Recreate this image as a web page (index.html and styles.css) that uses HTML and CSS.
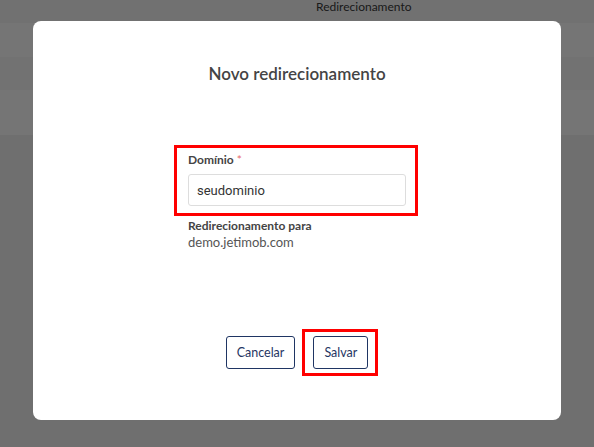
FILE: index.html
```html
<!DOCTYPE html>
<html lang="pt-BR">
<head>
  <meta charset="UTF-8" />
  <title>Redirecionamentos</title>
  <meta name="viewport" content="width=device-width, initial-scale=1.0"/>
  <link rel="stylesheet" href="styles.css">
</head>
<body>

  <!-- lista de redirecionamentos (fica atrás do modal) -->
  <div class="page">
    <div class="table-head"><span class="col-title">Redirecionamento</span></div>
    <div class="row"></div>
    <div class="row alt"></div>
    <div class="row tall"></div>
    <div class="row rest"></div>
  </div>

  <div class="overlay">
    <div class="modal">
      <h2 class="modal-title">Novo redirecionamento</h2>

      <div class="modal-body">
        <div class="form-group marked">
          <label for="domain">Domínio <span class="required">*</span></label>
          <input id="domain" type="text" value="seudominio">
        </div>

        <div class="target">
          <div class="target-label">Redirecionamento para</div>
          <div class="target-value">demo.jetimob.com</div>
        </div>
      </div>

      <div class="modal-footer">
        <button class="btn">Cancelar</button>
        <span class="marked-btn"><button class="btn">Salvar</button></span>
      </div>
    </div>
  </div>

</body>
</html>
```

FILE: styles.css
```css
:root {
  --text: #444;
  --muted: #555;
  --navy: #1f3563;
  --mark: #ff0000;
}

* {
  box-sizing: border-box;
}

body {
  margin: 0;
  font-family: Lato, 'Open Sans', sans-serif;
  background: #fff;
  color: var(--text);
  height: 447px;
  overflow: hidden;
}

/* página de fundo */
.page {
  display: flex;
  flex-direction: column;
  height: 100%;
}

.table-head {
  height: 23px;
  background: #f6f6f6;
  padding: 1px 0 0 316px;
}

.col-title {
  display: block;
  font-size: 12px;
  line-height: 12px;
  color: #3a3a3a;
}

.row {
  height: 34px;
  background: #fff;
}

.row.alt {
  height: 33px;
  background: #f9f9f9;
}

.row.tall {
  height: 45px;
}

.row.rest {
  flex: 1;
  background: #f1f1f1;
}

/* modal */
.overlay {
  position: fixed;
  inset: 0;
  background: rgba(0, 0, 0, 0.54);
  display: flex;
  justify-content: center;
  padding-top: 21px;
}

.modal {
  width: 528px;
  height: 399px;
  background: #fff;
  border-radius: 8px;
  display: flex;
  flex-direction: column;
  padding: 41px 24px 51px;
}

.modal-title {
  margin: 0;
  text-align: center;
  font-size: 17px;
  line-height: 24px;
  font-weight: 600;
  color: #444;
}

.modal-body {
  width: 218px;
  margin: 66px auto 0;
}

.form-group {
  display: flex;
  flex-direction: column;
  gap: 6px;
}

/* caixas vermelhas de destaque */
.marked,
.marked-btn {
  position: relative;
}

.marked::before,
.marked-btn::before {
  content: "";
  position: absolute;
  border: 3px solid var(--mark);
  pointer-events: none;
}

.marked::before {
  top: -7px;
  left: -14px;
  right: -12px;
  bottom: -10px;
}

.marked-btn::before {
  top: -7px;
  left: -11px;
  right: -10px;
  bottom: -7px;
}

label {
  font-size: 12px;
  line-height: 16px;
  font-weight: 700;
  color: var(--text);
}

.required {
  color: #e86a6a;
  font-weight: 400;
}

input {
  width: 100%;
  height: 32px;
  padding: 0 8px;
  border: 1px solid #ddd;
  border-radius: 3px;
  font-family: Roboto, sans-serif;
  font-size: 13px;
  color: #333;
  outline: none;
}

.target {
  margin-top: 12px;
}

.target-label {
  font-size: 12px;
  line-height: 16px;
  font-weight: 700;
  color: var(--text);
}

.target-value {
  font-size: 13px;
  line-height: 17px;
  color: var(--muted);
}

.modal-footer {
  margin-top: auto;
  display: flex;
  justify-content: center;
  gap: 18px;
}

.btn {
  height: 33px;
  padding: 0 10px;
  background: #fff;
  border: 1px solid var(--navy);
  border-radius: 3px;
  font-family: Lato, sans-serif;
  font-size: 12.5px;
  color: var(--navy);
  cursor: pointer;
}

.marked-btn {
  display: flex;
}
```
